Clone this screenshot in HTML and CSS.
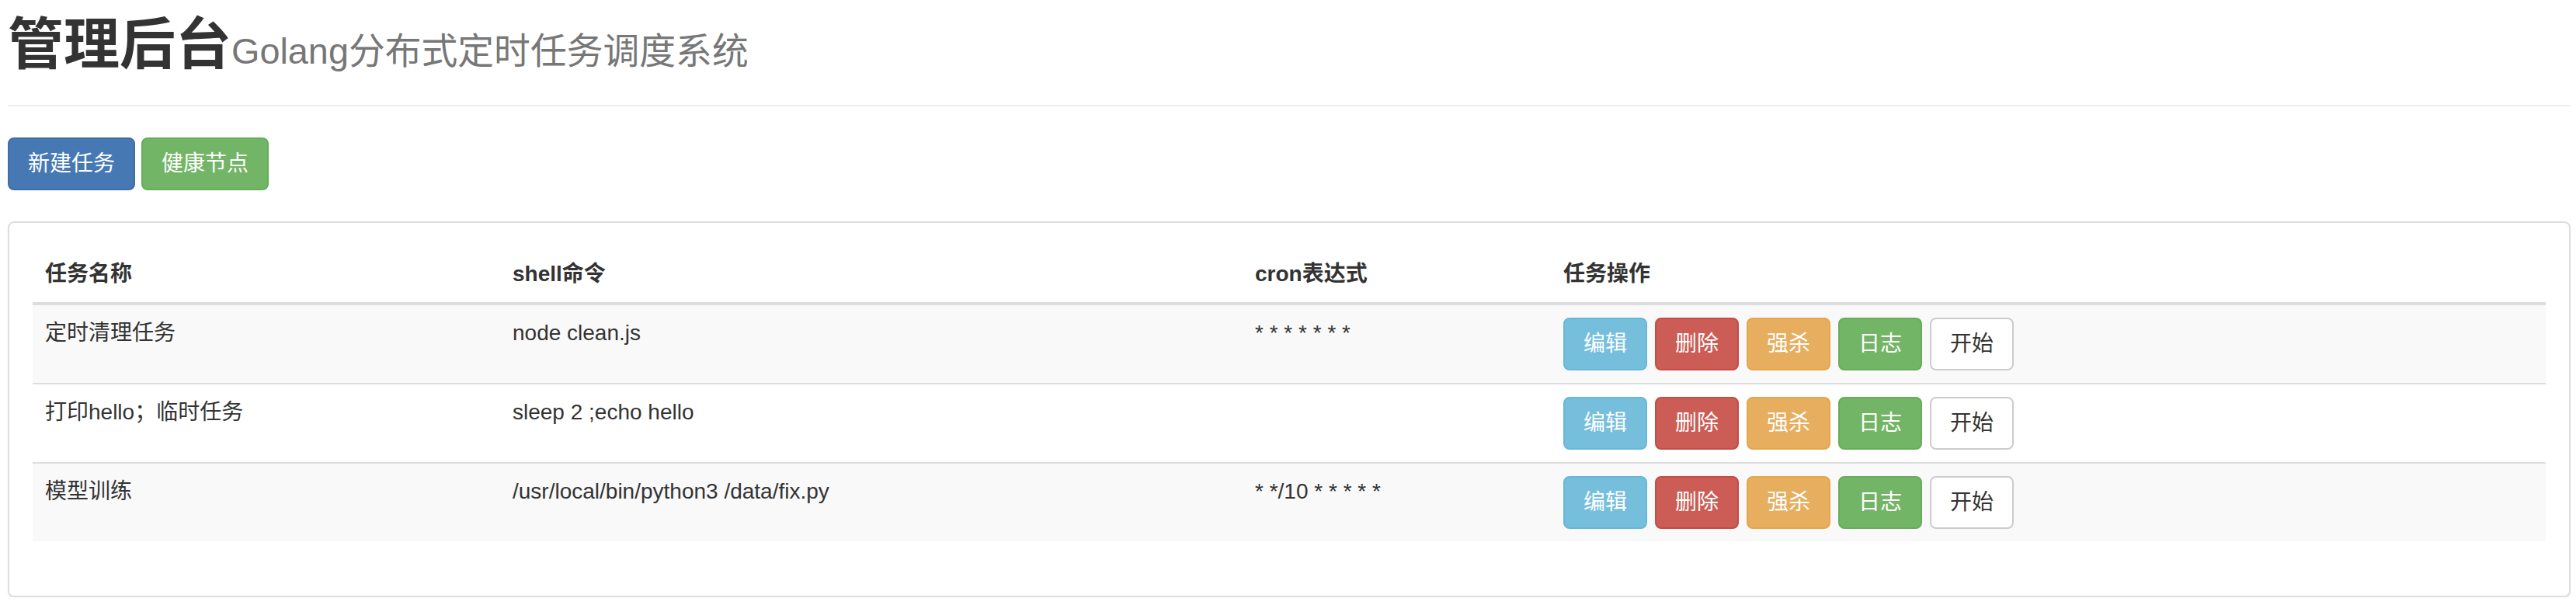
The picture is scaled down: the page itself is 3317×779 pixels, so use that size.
FILE: index.html
```html
<!DOCTYPE html>
<html lang="zh-CN">
<head>
<meta charset="utf-8">
<title>管理后台</title>
<link rel="stylesheet" href="styles.css">
</head>
<body>
<div class="page">
  <div class="page-header">
    <h1 class="title">管理后台<small class="subtitle">Golang分布式定时任务调度系统</small></h1>
  </div>
  <div class="toolbar">
    <button class="btn btn-primary">新建任务</button>
    <button class="btn btn-success">健康节点</button>
  </div>
  <div class="panel">
    <div class="panel-body">
      <table class="job-table">
        <colgroup>
          <col class="col-name">
          <col class="col-cmd">
          <col class="col-cron">
          <col class="col-ops">
        </colgroup>
        <thead>
          <tr><th>任务名称</th><th>shell命令</th><th>cron表达式</th><th>任务操作</th></tr>
        </thead>
        <tbody>
          <tr>
            <td>定时清理任务</td>
            <td>node clean.js</td>
            <td>* * * * * * *</td>
            <td><div class="ops"><button class="btn btn-info">编辑</button><button class="btn btn-danger">删除</button><button class="btn btn-warning">强杀</button><button class="btn btn-success">日志</button><button class="btn btn-default">开始</button></div></td>
          </tr>
          <tr>
            <td>打印hello；临时任务</td>
            <td>sleep 2 ;echo hello</td>
            <td></td>
            <td><div class="ops"><button class="btn btn-info">编辑</button><button class="btn btn-danger">删除</button><button class="btn btn-warning">强杀</button><button class="btn btn-success">日志</button><button class="btn btn-default">开始</button></div></td>
          </tr>
          <tr>
            <td>模型训练</td>
            <td>/usr/local/bin/python3 /data/fix.py</td>
            <td>* */10 * * * * *</td>
            <td><div class="ops"><button class="btn btn-info">编辑</button><button class="btn btn-danger">删除</button><button class="btn btn-warning">强杀</button><button class="btn btn-success">日志</button><button class="btn btn-default">开始</button></div></td>
          </tr>
        </tbody>
      </table>
    </div>
  </div>
</div>
</body>
</html>
```
FILE: styles.css
```css
html, body {
  margin: 0;
  padding: 0;
  background: #fff;
}
body {
  font-family: "Liberation Sans", "Noto Sans CJK SC", sans-serif;
  font-size: 28px;
  line-height: 40px;
  color: #333;
}
.page {
  padding: 0 7px 0 10px;
}
.page-header {
  padding-bottom: 38px;
  border-bottom: 2px solid #eee;
}
.title {
  margin: 18px 0 0 0;
  font-size: 72px;
  line-height: 79.2px;
  font-weight: 700;
  color: #333;
}
.subtitle {
  font-size: 65%;
  font-weight: 400;
  line-height: 1;
  color: #777;
}
.toolbar {
  display: flex;
  gap: 8px;
  margin-top: 40px;
}
.btn {
  display: inline-block;
  margin: 0;
  padding: 12px 24px;
  font-family: inherit;
  font-size: 28px;
  line-height: 40px;
  font-weight: 400;
  border: 2px solid transparent;
  border-radius: 8px;
  white-space: nowrap;
  cursor: pointer;
}
.btn-primary { background: #4679b3; border-color: #3f6ea4; color: #fff; }
.btn-success { background: #73b566; border-color: #66ae59; color: #fff; }
.btn-info    { background: #76bfdc; border-color: #66b8d8; color: #fff; }
.btn-danger  { background: #cb5c56; border-color: #c64c45; color: #fff; }
.btn-warning { background: #e6ae5e; border-color: #e5a64c; color: #fff; }
.btn-default { background: #fff; border-color: #ccc; color: #333; }
.panel {
  margin-top: 40px;
  border: 2px solid #ddd;
  border-radius: 8px;
  box-shadow: 0 2px 2px rgba(0, 0, 0, 0.05);
  background: #fff;
}
.panel-body {
  padding: 30px;
}
.job-table {
  width: 100%;
  table-layout: fixed;
  border-collapse: separate;
  border-spacing: 0;
  margin-bottom: 40px;
}
.col-name { width: 602px; }
.col-cmd { width: 956px; }
.col-cron { width: 397px; }
.job-table th {
  text-align: left;
  font-weight: 700;
  padding: 16px;
  vertical-align: bottom;
  border-bottom: 4px solid #ddd;
}
.job-table td {
  padding: 16px;
  vertical-align: top;
  border-top: 2px solid #ddd;
}
.job-table tbody tr:first-child td {
  border-top: 0;
}
.job-table tbody tr:nth-child(odd) {
  background: #f9f9f9;
}
.ops {
  display: flex;
  gap: 10px;
}
```
